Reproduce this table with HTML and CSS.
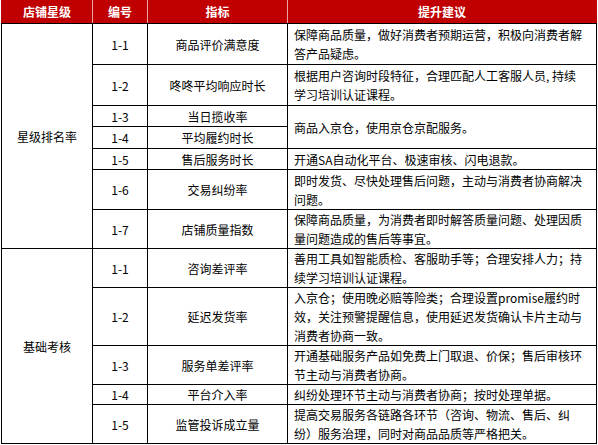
FILE: index.html
```html
<!DOCTYPE html>
<html lang="zh-CN">
<head>
<meta charset="utf-8">
<title>店铺星级</title>
<link rel="stylesheet" href="styles.css">
</head>
<body>
<table class="grid">
  <colgroup>
    <col class="c-level">
    <col class="c-no">
    <col class="c-metric">
    <col class="c-advice">
  </colgroup>
  <thead>
    <tr class="h-head">
      <th>店铺星级</th>
      <th>编号</th>
      <th>指标</th>
      <th>提升建议</th>
    </tr>
  </thead>
  <tbody>
    <tr class="h41">
      <td rowspan="7" class="group">星级排名率</td>
      <td>1-1</td>
      <td>商品评价满意度</td>
      <td class="advice">保障商品质量，做好消费者预期运营，积极向消费者解<br>答产品疑虑。</td>
    </tr>
    <tr class="h41">
      <td>1-2</td>
      <td>咚咚平均响应时长</td>
      <td class="advice">根据用户咨询时段特征，合理匹配人工客服人员, 持续<br>学习培训认证课程。</td>
    </tr>
    <tr class="h21">
      <td>1-3</td>
      <td>当日揽收率</td>
      <td rowspan="2" class="advice">商品入京仓，使用京仓京配服务。</td>
    </tr>
    <tr class="h22">
      <td>1-4</td>
      <td>平均履约时长</td>
    </tr>
    <tr class="h21">
      <td>1-5</td>
      <td>售后服务时长</td>
      <td class="advice">开通SA自动化平台、极速审核、闪电退款。</td>
    </tr>
    <tr class="h40">
      <td>1-6</td>
      <td>交易纠纷率</td>
      <td class="advice">即时发货、尽快处理售后问题，主动与消费者协商解决<br>问题。</td>
    </tr>
    <tr class="h39">
      <td>1-7</td>
      <td>店铺质量指数</td>
      <td class="advice">保障商品质量，为消费者即时解答质量问题、处理因质<br>量问题造成的售后等事宜。</td>
    </tr>
    <tr class="h39">
      <td rowspan="5" class="group">基础考核</td>
      <td>1-1</td>
      <td>咨询差评率</td>
      <td class="advice">善用工具如智能质检、客服助手等；合理安排人力；持<br>续学习培训认证课程。</td>
    </tr>
    <tr class="h58">
      <td>1-2</td>
      <td>延迟发货率</td>
      <td class="advice">入京仓；使用晚必赔等险类；合理设置promise履约时<br>效，关注预警提醒信息，使用延迟发货确认卡片主动与<br>消费者协商一致。</td>
    </tr>
    <tr class="h39">
      <td>1-3</td>
      <td>服务单差评率</td>
      <td class="advice">开通基础服务产品如免费上门取退、价保；售后审核环<br>节主动与消费者协商。</td>
    </tr>
    <tr class="h20">
      <td>1-4</td>
      <td>平台介入率</td>
      <td class="advice">纠纷处理环节主动与消费者协商；按时处理单据。</td>
    </tr>
    <tr class="h39">
      <td>1-5</td>
      <td>监管投诉成立量</td>
      <td class="advice">提高交易服务各链路各环节（咨询、物流、售后、纠<br>纷）服务治理，同时对商品品质等严格把关。</td>
    </tr>
  </tbody>
</table>
</body>
</html>
```

FILE: styles.css
```css
html, body {
  margin: 0;
  padding: 0;
  background: #ffffff;
}

body {
  padding: 0 0 0 1px;
  font-family: "Noto Sans CJK SC", "Microsoft YaHei", sans-serif;
  font-size: 12px;
  color: #000000;
}

.grid {
  border-collapse: collapse;
  table-layout: fixed;
  width: 596px;
}

.c-level { width: 91px; }
.c-no { width: 55px; }
.c-metric { width: 140px; }
.c-advice { width: 309px; }

.grid th {
  background: #c00000;
  color: #ffffff;
  font-weight: bold;
  font-size: 12px;
  height: 22px;
  padding: 0;
  line-height: 20px;
  text-align: center;
  border-top: 1px solid #c00000;
  border-left: 1px solid #e9a3a3;
  border-right: 1px solid #e9a3a3;
  border-bottom: 1px solid #000000;
}

.grid th:first-child {
  border-left-color: #c00000;
}

.grid th:last-child {
  border-right-color: #c00000;
}

.grid td {
  border: 1px solid #000000;
  padding: 0;
  line-height: 19px;
  text-align: center;
  vertical-align: middle;
  white-space: nowrap;
}

.grid td.advice {
  text-align: left;
  padding: 0 4px 0 6px;
}

.h20 { height: 20px; }
.h21 { height: 21px; }
.h22 { height: 22px; }
.h39 { height: 39px; }
.h40 { height: 40px; }
.h41 { height: 41px; }
.h58 { height: 58px; }
```
